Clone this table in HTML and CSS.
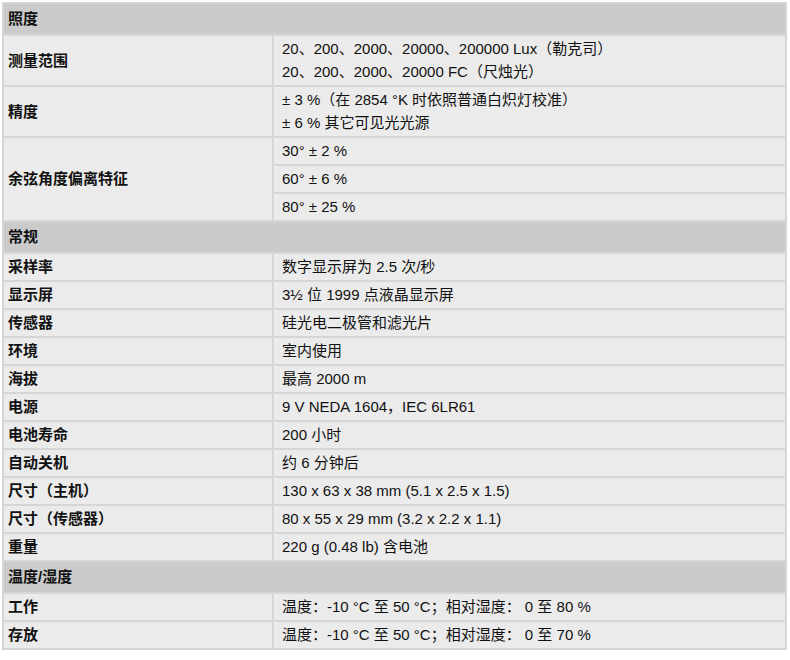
FILE: index.html
```html
<!DOCTYPE html>
<html lang="zh-CN">
<head>
<meta charset="utf-8">
<title>规格</title>
<link rel="stylesheet" href="styles.css">
</head>
<body>
<div class="wrap">
<table class="spec">
  <colgroup><col class="c1"><col class="c2"></colgroup>
  <tbody>
    <tr class="sec"><th colspan="2">照度</th></tr>
    <tr><th class="lbl">测量范围</th><td class="two">20、200、2000、20000、200000 Lux（勒克司）<br>20、200、2000、20000 FC（尺烛光）</td></tr>
    <tr><th class="lbl">精度</th><td class="two">± 3 %（在 2854 °K 时依照普通白炽灯校准）<br>± 6 % 其它可见光光源</td></tr>
    <tr><th class="lbl" rowspan="3">余弦角度偏离特征</th><td>30° ± 2 %</td></tr>
    <tr><td>60° ± 6 %</td></tr>
    <tr><td>80° ± 25 %</td></tr>
    <tr class="sec"><th colspan="2">常规</th></tr>
    <tr><th class="lbl">采样率</th><td>数字显示屏为 2.5 次/秒</td></tr>
    <tr><th class="lbl">显示屏</th><td>3½ 位 1999 点液晶显示屏</td></tr>
    <tr><th class="lbl">传感器</th><td>硅光电二极管和滤光片</td></tr>
    <tr><th class="lbl">环境</th><td>室内使用</td></tr>
    <tr><th class="lbl">海拔</th><td>最高 2000 m</td></tr>
    <tr><th class="lbl">电源</th><td>9 V NEDA 1604，IEC 6LR61</td></tr>
    <tr><th class="lbl">电池寿命</th><td>200 小时</td></tr>
    <tr><th class="lbl">自动关机</th><td>约 6 分钟后</td></tr>
    <tr><th class="lbl">尺寸（主机）</th><td>130 x 63 x 38 mm (5.1 x 2.5 x 1.5)</td></tr>
    <tr><th class="lbl">尺寸（传感器）</th><td>80 x 55 x 29 mm (3.2 x 2.2 x 1.1)</td></tr>
    <tr><th class="lbl">重量</th><td>220 g (0.48 lb) 含电池</td></tr>
    <tr class="sec"><th colspan="2">温度/湿度</th></tr>
    <tr><th class="lbl">工作</th><td>温度：-10 °C 至 50 °C；相对湿度： 0 至 80 %</td></tr>
    <tr><th class="lbl">存放</th><td>温度：-10 °C 至 50 °C；相对湿度： 0 至 70 %</td></tr>
  </tbody>
</table>
</div>
</body>
</html>
```

FILE: styles.css
```css
html, body {
  margin: 0;
  padding: 0;
  background: #ffffff;
}

.wrap {
  padding: 2px 0 0 2px;
  width: 786px;
}

.spec {
  width: 785px;
  border-collapse: separate;
  border-spacing: 2px;
  background: #d6d6d6;
  table-layout: fixed;
  font-family: "Liberation Sans", Arial, "Noto Sans CJK SC", sans-serif;
  font-size: 15px;
  color: #111111;
}

.c1 { width: 268px; }

.spec th,
.spec td {
  background: #ebebeb;
  padding: 2px 5px 2px 6px;
  line-height: 22px;
  text-align: left;
  vertical-align: middle;
  font-weight: normal;
}

.spec td { padding-left: 8px; }

.spec th.lbl {
  font-weight: bold;
  padding-left: 4px;
}

.spec td.two {
  padding-top: 1px;
  padding-bottom: 2px;
  line-height: 23px;
}

.spec tr.sec th {
  background: #cbcbcb;
  font-weight: bold;
  padding: 4px 4px;
}
```
